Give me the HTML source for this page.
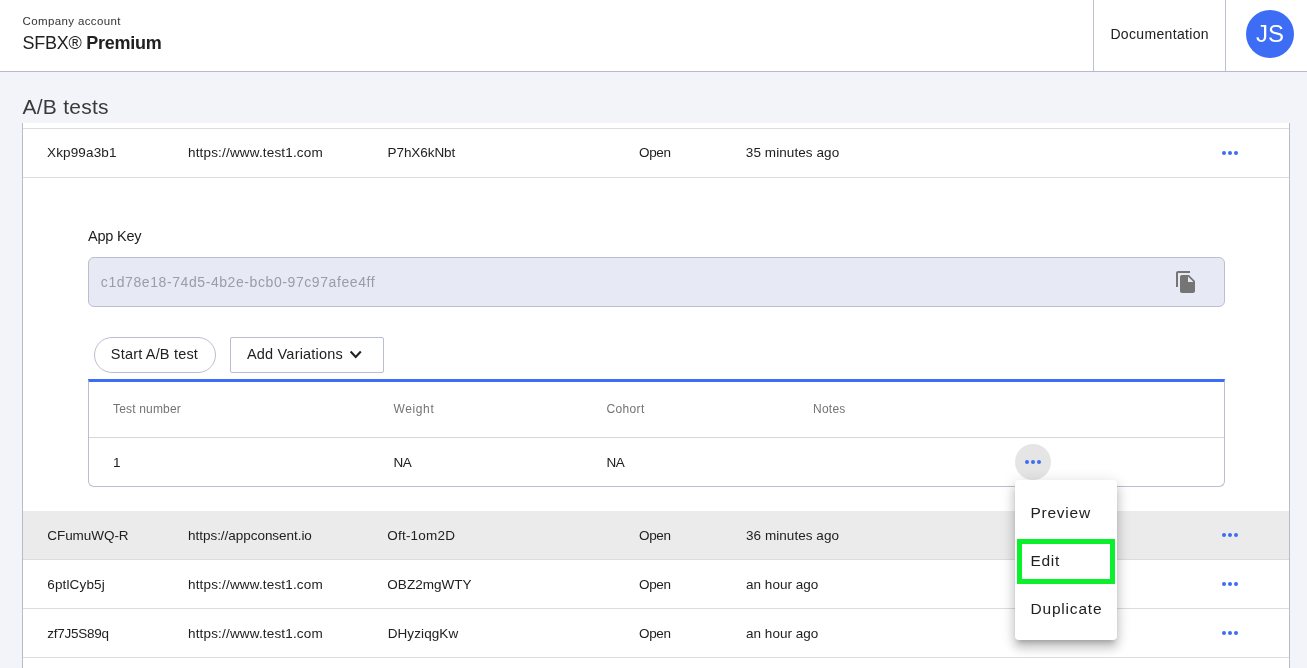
<!DOCTYPE html>
<html lang="en">
<head>
<meta charset="utf-8">
<title>A/B tests</title>
<style>
*{box-sizing:border-box;margin:0;padding:0}
html,body{width:1307px;height:668px;overflow:hidden}
body{background:#f3f4fa;font-family:"Liberation Sans",sans-serif;color:#212121;position:relative;font-size:14px}
#wrap{position:absolute;left:0;top:0;width:1307px;height:668px;overflow:hidden;will-change:transform}
/* header */
#hdr{position:absolute;left:0;top:0;width:1307px;height:72px;background:#fff;border-bottom:1px solid #b6bacc}
.vdiv{position:absolute;top:0;width:1px;height:71px;background:#bcc0d1}
#avatar{position:absolute;left:1246px;top:10px;width:48px;height:48px;border-radius:50%;background:#3d6cf5;color:#fff;font-size:24px;line-height:48px;text-align:center}
/* table */
#tbl{position:absolute;left:22px;top:123px;width:1268px;height:545px;background:#fff;border-left:1px solid #b6bacc;border-right:1px solid #b6bacc}
.hl{position:absolute;left:23px;width:1266px;height:1px;background:#dcdcdc}
.row{position:absolute;left:23px;width:1266px;height:48px}
.t{position:absolute;white-space:nowrap;font-size:13.5px;line-height:16px;color:#212121}
.dots{position:absolute;width:16px;height:4px}
.dots i{position:absolute;top:0;width:4px;height:4px;border-radius:50%;background:#3d6cf5}
.dots i:nth-child(1){left:0}.dots i:nth-child(2){left:6px}.dots i:nth-child(3){left:12px}
/* expanded */
#key{position:absolute;left:88px;top:257px;width:1137px;height:50px;background:#e7e9f5;border:1px solid #babecf;border-radius:6px}
#btn1{position:absolute;left:94px;top:337px;width:122px;height:36px;border:1px solid #babecf;border-radius:18px;background:#fff}
#btn2{position:absolute;left:230px;top:337px;width:154px;height:36px;border:1px solid #babecf;border-radius:2px;background:#fff}
#inner{position:absolute;left:88px;top:379px;width:1137px;height:108px;background:#fff;border:1px solid #babecf;border-top:3px solid #3d6cf5;border-radius:0 0 6px 6px}
#innersep{position:absolute;left:89px;top:437px;width:1135px;height:1px;background:#d6d7dd}
.th{position:absolute;white-space:nowrap;font-size:12px;line-height:14px;color:#737373}
#circ{position:absolute;left:1015px;top:444px;width:36px;height:36px;border-radius:50%;background:#e5e5e5}
#menu{position:absolute;left:1015px;top:480px;width:102px;height:160px;background:#fff;border-radius:4px;box-shadow:0 5px 5px -3px rgba(0,0,0,.2),0 8px 10px 1px rgba(0,0,0,.14),0 3px 14px 2px rgba(0,0,0,.12)}
.mi{position:absolute;left:1031px;white-space:nowrap;font-size:15.5px;line-height:18px;color:#212121}
#green{position:absolute;left:1017px;top:539px;width:98px;height:45px;border:5px solid #0bf02c}
</style>
</head>
<body>
<div id="wrap">
<div id="hdr"></div>
<div class="t" id="h1" style="left:22.5px;top:14px;font-size:11.5px;line-height:14px;color:#333;letter-spacing:0.38px">Company account</div>
<div class="t" id="h2" style="left:22.5px;top:32px;font-size:18px;line-height:22px;color:#212121;letter-spacing:-0.25px">SFBX® <b>Premium</b></div>
<div class="vdiv" style="left:1093px"></div>
<div class="vdiv" style="left:1225px"></div>
<div class="t" id="doc" style="left:1110.4px;top:26px;font-size:14px;color:#212121;letter-spacing:0.34px">Documentation</div>
<div id="avatar">JS</div>

<div class="t" id="title" style="left:22.5px;top:94px;font-size:21px;line-height:26px;color:#3a3a3a;letter-spacing:0.24px">A/B tests</div>

<div id="tbl"></div>
<div class="hl" style="top:128px"></div>
<div class="hl" style="top:177px"></div>
<div class="row" style="top:511px;background:#ebebeb"></div>
<div class="hl" style="top:559px"></div>
<div class="hl" style="top:608px"></div>
<div class="hl" style="top:657px"></div>

<!-- row 1 -->
<div class="t r1" id="a1" style="left:47.0px;top:145px;letter-spacing:0.15px">Xkp99a3b1</div>
<div class="t r1" id="a2" style="left:188.0px;top:145px;letter-spacing:0.17px">https://www.test1.com</div>
<div class="t r1" id="a3" style="left:387.5px;top:145px;letter-spacing:-0.06px">P7hX6kNbt</div>
<div class="t r1" id="a4" style="left:639.0px;top:145px;letter-spacing:-0.37px">Open</div>
<div class="t r1" id="a5" style="left:745.8px;top:145px;letter-spacing:0.08px">35 minutes ago</div>
<div class="dots" style="left:1222px;top:151px"><i></i><i></i><i></i></div>

<!-- expanded -->
<div class="t" id="lbl" style="left:88.0px;top:228px;font-size:14.5px;letter-spacing:-0.21px">App Key</div>
<div id="key"></div>
<div class="t" id="keytxt" style="left:100.8px;top:274px;font-size:14px;color:#9a9da8;letter-spacing:0.58px">c1d78e18-74d5-4b2e-bcb0-97c97afee4ff</div>
<svg style="position:absolute;left:1173.5px;top:270px" width="24" height="24" viewBox="0 0 24 24"><path fill="#757575" d="M16 1H4c-1.1 0-2 .9-2 2v14h2V3h12V1zm-1 4l6 6v10c0 1.1-.9 2-2 2H7.990C6.890 23 6 22.100 6 21l.010-14c0-1.100.890-2 1.990-2h7zm-1 7h5.500L14 6.500V12z"/></svg>

<div id="btn1"></div>
<div class="t" id="b1t" style="left:110.8px;top:346px;font-size:14.5px;letter-spacing:0.19px">Start A/B test</div>
<div id="btn2"></div>
<div class="t" id="b2t" style="left:247.0px;top:346px;font-size:14.5px;letter-spacing:0.19px">Add Variations</div>
<svg style="position:absolute;left:348.600px;top:350.300px" width="14" height="10" viewBox="0 0 14 10"><path d="M1.600 1.600 L6.700 6.900 L11.800 1.600" fill="none" stroke="#212121" stroke-width="2.100"/></svg>

<div id="inner"></div>
<div id="innersep"></div>
<div class="th" id="c1" style="left:113.0px;top:402px;letter-spacing:0.17px">Test number</div>
<div class="th" id="c2" style="left:393.5px;top:402px;letter-spacing:0.62px">Weight</div>
<div class="th" id="c3" style="left:606.5px;top:402px;letter-spacing:0.34px">Cohort</div>
<div class="th" id="c4" style="left:813.0px;top:402px;letter-spacing:0.25px">Notes</div>
<div class="t" id="d1" style="left:113.0px;top:455px;letter-spacing:-1.00px">1</div>
<div class="t" id="d2" style="left:393.5px;top:455px;letter-spacing:-0.50px">NA</div>
<div class="t" id="d3" style="left:606.5px;top:455px;letter-spacing:-0.50px">NA</div>

<!-- rows 2-4 -->
<div class="t" id="e1" style="left:47.3px;top:528px;letter-spacing:-0.06px">CFumuWQ-R</div>
<div class="t" id="e2" style="left:188.1px;top:528px;letter-spacing:-0.04px">https://appconsent.io</div>
<div class="t" id="e3" style="left:387.3px;top:528px;letter-spacing:0.20px">Oft-1om2D</div>
<div class="t" id="e4" style="left:639.0px;top:528px;letter-spacing:-0.37px">Open</div>
<div class="t" id="e5" style="left:746.0px;top:528px;letter-spacing:0.05px">36 minutes ago</div>
<div class="dots" style="left:1222px;top:533px"><i></i><i></i><i></i></div>

<div class="t" id="f1" style="left:47.3px;top:577px;letter-spacing:0.14px">6ptlCyb5j</div>
<div class="t" id="f2" style="left:188.0px;top:577px;letter-spacing:0.17px">https://www.test1.com</div>
<div class="t" id="f3" style="left:387.3px;top:577px;letter-spacing:0.04px">OBZ2mgWTY</div>
<div class="t" id="f4" style="left:639.0px;top:577px;letter-spacing:-0.37px">Open</div>
<div class="t" id="f5" style="left:746.0px;top:577px;letter-spacing:0.03px">an hour ago</div>
<div class="dots" style="left:1222px;top:582px"><i></i><i></i><i></i></div>

<div class="t" id="g1" style="left:47.3px;top:626px;letter-spacing:-0.26px">zf7J5S89q</div>
<div class="t" id="g2" style="left:188.0px;top:626px;letter-spacing:0.17px">https://www.test1.com</div>
<div class="t" id="g3" style="left:387.7px;top:626px;letter-spacing:0.09px">DHyziqgKw</div>
<div class="t" id="g4" style="left:639.0px;top:626px;letter-spacing:-0.37px">Open</div>
<div class="t" id="g5" style="left:746.0px;top:626px;letter-spacing:0.03px">an hour ago</div>
<div class="dots" style="left:1222px;top:631px"><i></i><i></i><i></i></div>

<!-- menu -->
<div id="circ"></div>
<div class="dots" style="left:1025px;top:460px"><i></i><i></i><i></i></div>
<div id="menu"></div>
<div class="mi" id="m1" style="left:1030.5px;top:504px;letter-spacing:0.75px">Preview</div>
<div id="green"></div>
<div class="mi" id="m2" style="left:1030.5px;top:552px;letter-spacing:0.66px">Edit</div>
<div class="mi" id="m3" style="left:1030.5px;top:600px;letter-spacing:0.81px">Duplicate</div>
</div>
</body>
</html>
